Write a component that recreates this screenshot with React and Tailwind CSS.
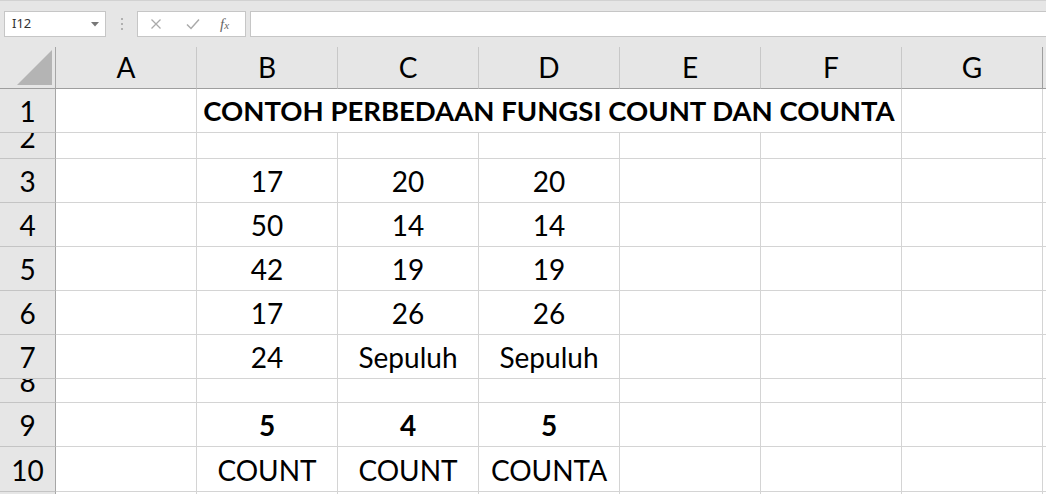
import React from "react";

const cols = ["A", "B", "C", "D", "E", "F", "G"];

// row number, height, cells for A..G, bold
const rows = [
  { n: 2, h: "h-[26px]", cells: ["", "", "", "", "", "", ""] },
  { n: 3, h: "h-[44px]", cells: ["", "17", "20", "20", "", "", ""] },
  { n: 4, h: "h-[44px]", cells: ["", "50", "14", "14", "", "", ""] },
  { n: 5, h: "h-[44px]", cells: ["", "42", "19", "19", "", "", ""] },
  { n: 6, h: "h-[44px]", cells: ["", "17", "26", "26", "", "", ""] },
  { n: 7, h: "h-[44px]", cells: ["", "24", "Sepuluh", "Sepuluh", "", "", ""] },
  { n: 8, h: "h-[24px]", cells: ["", "", "", "", "", "", ""] },
  { n: 9, h: "h-[44px]", cells: ["", "5", "4", "5", "", "", ""], bold: true },
  { n: 10, h: "h-[45px]", cells: ["", "COUNT", "COUNT", "COUNTA", "", "", ""] },
  { n: 11, h: "h-[44px]", cells: ["", "", "", "", "", "", ""] },
];

function Cell({ children, bold, className = "" }) {
  return (
    <div
      className={`flex items-end justify-center overflow-hidden border-r border-b border-[#d4d4d4] bg-white ${className}`}
    >
      <span
        className={`block shrink-0 leading-[42px] h-[42px] whitespace-nowrap ${bold ? "font-bold" : ""}`}
      >
        {children}
      </span>
    </div>
  );
}

function RowHead({ n, h }) {
  return (
    <div
      className={`flex items-end justify-center overflow-hidden border-r border-b border-r-[#a6a6a6] border-b-[#c4c4c4] bg-[#e6e6e6] ${h}`}
    >
      <span className="block shrink-0 leading-[42px] h-[42px]">{n}</span>
    </div>
  );
}

export default function App() {
  return (
    <div
      className="w-[1046px] h-[494px] overflow-hidden bg-white text-black text-[28px]"
      style={{ fontFamily: "Lato, 'Open Sans', sans-serif" }}
    >
      {/* formula bar */}
      <div
        className="h-[47px] bg-[#e6e6e6] border-t border-[#d2d2d2] flex items-start pt-[10px] pl-1"
        style={{ fontFamily: "'Noto Sans', 'Liberation Sans', sans-serif" }}
      >
        <div className="w-[102px] h-[26px] bg-white border border-[#c6c6c6] flex items-center justify-between pl-[7px] pr-[6px] text-[13px] text-[#333]">
          <span>I12</span>
          <svg width="8" height="5" viewBox="0 0 8 5">
            <path d="M0 0 L8 0 L4 4.5 Z" fill="#777" />
          </svg>
        </div>
        <div className="w-[31px] h-[26px] flex flex-col items-center justify-center gap-[3px]">
          <span className="block w-[2px] h-[2px] bg-[#b0b0b0]" />
          <span className="block w-[2px] h-[2px] bg-[#b0b0b0]" />
          <span className="block w-[2px] h-[2px] bg-[#b0b0b0]" />
        </div>
        <div className="w-[109px] h-[26px] bg-white border border-[#c6c6c6] flex items-center pl-[12px]">
          <svg width="12" height="12" viewBox="0 0 12 12" className="mr-[24px]">
            <path d="M1.5 1.5 L10.5 10.5 M10.5 1.5 L1.5 10.5" stroke="#aaa" strokeWidth="1.3" fill="none" />
          </svg>
          <svg width="14" height="12" viewBox="0 0 14 12" className="mr-[20px]">
            <path d="M1 6.5 L5 10.5 L13 1.5" stroke="#aaa" strokeWidth="1.5" fill="none" />
          </svg>
          <span
            className="italic text-[15px] text-[#666] leading-none"
            style={{ fontFamily: "'Liberation Serif', serif" }}
          >
            f<span className="text-[11px]">x</span>
          </span>
        </div>
        <div className="ml-[4px] flex-1 h-[26px] bg-white border border-[#c6c6c6] border-r-0" />
      </div>

      {/* sheet grid */}
      <div className="grid grid-cols-[56px_repeat(7,141px)_1fr]">
        {/* header row */}
        <div className="h-[42px] bg-[#e6e6e6] border-r border-b border-r-[#a6a6a6] border-b-[#9e9e9e] flex items-end justify-end pr-[3px] pb-[3px]">
          <svg width="35" height="35" viewBox="0 0 35 35">
            <path d="M35 0 L35 35 L0 35 Z" fill="#b4b4b4" />
          </svg>
        </div>
        {cols.map((c, i) => (
          <div
            key={c}
            className={`h-[42px] bg-[#e6e6e6] border-b border-b-[#9e9e9e] border-r flex items-center justify-center leading-[41px] ${
              i === 6 ? "border-r-[#9e9e9e]" : "border-r-[#c8c8c8]"
            }`}
          >
            {c}
          </div>
        ))}
        <div className="h-[42px] bg-[#e6e6e6] border-b border-b-[#9e9e9e]" />

        {/* row 1, title merged over B:F */}
        <RowHead n={1} h="h-[44px]" />
        <Cell className="h-[44px]" />
        <Cell className="h-[44px] col-span-5 text-[27.5px]" bold>
          CONTOH PERBEDAAN FUNGSI COUNT DAN COUNTA
        </Cell>
        <Cell className="h-[44px]" />
        <Cell className="h-[44px] border-r-0" />

        {rows.map((r) => (
          <React.Fragment key={r.n}>
            <RowHead n={r.n} h={r.h} />
            {r.cells.map((v, i) => (
              <Cell key={i} className={r.h} bold={r.bold}>
                {v}
              </Cell>
            ))}
            <Cell className={`${r.h} border-r-0`} />
          </React.Fragment>
        ))}
      </div>
    </div>
  );
}
